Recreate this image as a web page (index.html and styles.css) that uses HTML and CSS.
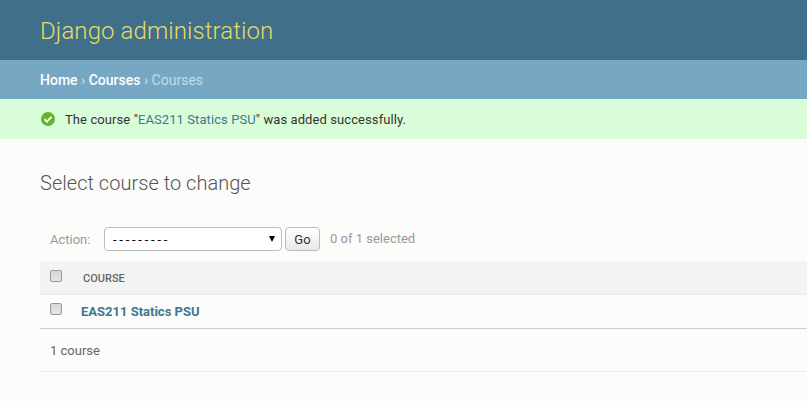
FILE: index.html
```html
<!DOCTYPE html>
<html lang="en">
<head>
<meta charset="utf-8">
<title>Select course to change | Django site admin</title>
<link rel="stylesheet" href="styles.css">
</head>
<body>
<header class="header"><h1 class="site-name">Django administration</h1></header>
<nav class="breadcrumbs"><a href="#">Home</a> › <a href="#">Courses</a> › Courses</nav>
<div class="message">
<svg class="tick" viewBox="0 0 14 14"><circle cx="7" cy="7" r="7" fill="#63b52c"/><path d="M3.5 7.2 6 9.6 10.5 4.9" fill="none" stroke="#fff" stroke-width="2"/></svg>
<span class="message-text">The course "<a href="#">EAS211 Statics PSU</a>" was added successfully.</span>
</div>
<main class="content">
<h2 class="title">Select course to change</h2>
<div class="actions">
<label class="label" for="action">Action:</label>
<div class="select" id="action"><span class="dashes">---------</span><span class="arrow"></span></div>
<button class="go">Go</button>
<span class="counter">0 of 1 selected</span>
</div>
<div class="row head"><span class="check"></span><span class="column">COURSE</span></div>
<div class="row item"><span class="check"></span><a class="course" href="#">EAS211 Statics PSU</a></div>
<p class="paginator">1 course</p>
</main>
</body>
</html>
```

FILE: styles.css
```css
* { box-sizing: border-box; }
body {
  margin: 0;
  height: 401px;
  overflow: hidden;
  background: #fcfcfa;
  color: #333;
  font: 13px/20px Roboto, sans-serif;
}
a { text-decoration: none; color: #417690; }
.header {
  height: 60px;
  padding: 2px 0 0 40px;
  display: flex;
  align-items: center;
  background: #3f6f8a;
}
.site-name {
  margin: 0;
  font-size: 24px;
  font-weight: 300;
  letter-spacing: 0.09px;
  color: #e9da62;
}
.breadcrumbs {
  height: 39px;
  padding: 10px 40px;
  font-size: 14px;
  background: #77a8c3;
  color: #c4dce8;
}
.breadcrumbs a { color: #fff; font-weight: 500; }
.message {
  height: 40px;
  padding-left: 41px;
  display: flex;
  align-items: center;
  gap: 10px;
  background: #dafdd9;
}
.message-text { padding-top: 2px; letter-spacing: 0.09px; }
.tick { width: 14px; height: 14px; }
.content { padding: 34px 0 0 40px; }
.title {
  margin: 0 0 34px;
  font-size: 20px;
  line-height: 20px;
  font-weight: 300;
  letter-spacing: 0.03px;
  color: #555;
}
.actions {
  height: 24px;
  margin-bottom: 10px;
  padding-left: 10px;
  display: flex;
  align-items: center;
  color: #999;
}
.label { width: 54px; padding-top: 2px; }
.select {
  width: 178px;
  height: 24px;
  padding: 0 6px 0 8px;
  display: flex;
  align-items: center;
  justify-content: space-between;
  border: 1px solid #bbb;
  border-radius: 4px;
  background: #fff;
  color: #000;
}
.dashes { padding-top: 2px; letter-spacing: 2.75px; }
.arrow {
  border: 3.5px solid transparent;
  border-top: 6px solid #000;
  border-bottom: 0;
}
.go {
  width: 35px;
  height: 24px;
  margin: 0 10px 0 3px;
  padding: 0;
  border: 1px solid #bbb;
  border-radius: 4px;
  background: linear-gradient(#fff, #e8e8e8);
  font: 13px Roboto, sans-serif;
  color: #333;
}
.row { padding-left: 10px; display: flex; }
.head { height: 34px; background: #f3f3f3; border-bottom: 1px solid #eee; }
.item { height: 34px; border-bottom: 1px solid #ccc; }
.check {
  width: 12px;
  height: 12px;
  margin-top: 9px;
  border: 1px solid #999;
  border-radius: 2px;
  background: linear-gradient(#d8d8d8, #e4e4e4);
}
.item .check { margin-top: 8px; }
.column { margin: 8px 0 0 21px; font-size: 11px; font-weight: 500; color: #666; }
.course { margin: 7px 0 0 19px; font-weight: 700; }
.paginator { height: 43px; margin: 0; padding: 12px 10px; border-bottom: 1px solid #eee; color: #666; }
```
